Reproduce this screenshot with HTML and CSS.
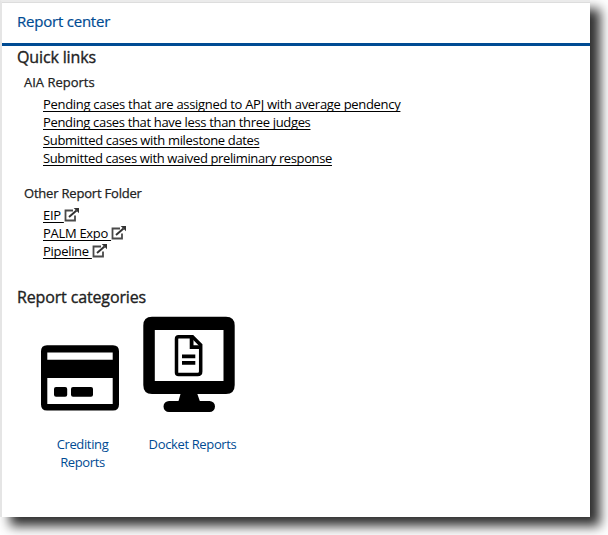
FILE: index.html
```html
<!DOCTYPE html>
<html lang="en">
<head>
<meta charset="utf-8">
<title>Report center</title>
<link rel="stylesheet" href="styles.css">
</head>
<body>
<svg width="0" height="0" class="defs" aria-hidden="true">
  <symbol id="external" viewBox="0 0 16 14">
    <path d="M9 2.5H1.5v10h9.5V7.5" fill="none" stroke="#4a4a4a" stroke-width="1.8"/>
    <path d="M5 9L12.5 2.6" fill="none" stroke="#333" stroke-width="2"/>
    <path d="M9.7 0H15v5.2z" fill="#333"/>
  </symbol>
</svg>
<main class="panel">
  <header class="header"><h1>Report center</h1></header>
  <section class="quick">
    <h2>Quick links</h2>
    <h3 class="aia">AIA Reports</h3>
    <ul class="links">
      <li><a href="#" class="l1">Pending cases that are assigned to APJ with average pendency</a></li>
      <li><a href="#" class="l2">Pending cases that have less than three judges</a></li>
      <li><a href="#" class="l3">Submitted cases with milestone dates</a></li>
      <li><a href="#" class="l4">Submitted cases with waived preliminary response</a></li>
    </ul>
    <h3 class="other">Other Report Folder</h3>
    <ul class="links">
      <li><a href="#">EIP&nbsp;</a><svg class="ext"><use href="#external"/></svg></li>
      <li><a href="#">PALM Expo&nbsp;</a><svg class="ext"><use href="#external"/></svg></li>
      <li><a href="#">Pipeline&nbsp;</a><svg class="ext"><use href="#external"/></svg></li>
    </ul>
  </section>
  <section>
    <h2 class="cat-title">Report categories</h2>
    <div class="categories">
      <a href="#" class="category crediting">
        <svg width="80" height="110" viewBox="0 0 80 110">
          <path fill-rule="evenodd" d="M7 35.3H73Q79 35.3 79 41.3V94.6Q79 100.6 73 100.6H7Q1 100.6 1 94.6V41.3Q1 35.3 7 35.3ZM7.3 42.5V49.7H72.7V42.5ZM7.3 68V94H72.7V68Z"/>
          <rect x="14" y="77" width="13.2" height="9.8" rx="2"/><rect x="31" y="77" width="22" height="9.8" rx="2"/>
        </svg>
        <span>Crediting<br>Reports</span>
      </a>
      <a href="#" class="category docket">
        <svg width="92" height="110" viewBox="0 0 92 110">
          <path fill-rule="evenodd" d="M9 6.7H83Q91.7 6.7 91.7 15.5V75Q91.7 84 83 84H9Q.3 84 .3 75V15.5Q.3 6.7 9 6.7ZM11.8 20V71H80.5V20Z"/>
          <path d="M37.8 83H54L56.8 91H66.5a5.3 5.3 0 0 1 0 11H26a5.5 5.5 0 0 1 0-11H35.5Z"/>
          <path d="M35.5 26.8H49.5L57.7 35V61.5Q57.7 64.5 54.7 64.5H35.5Q33.5 64.5 33.5 62.5V29Q33.5 26.8 35.5 26.8Z" fill="none" stroke="#000" stroke-width="3.5"/>
          <path d="M48.6 27V37.2H58M39 46.3H52.3M39 52.9H52.3" fill="none" stroke="#000" stroke-width="3.8"/>
        </svg>
        <span>Docket Reports</span>
      </a>
    </div>
  </section>
</main>
</body>
</html>
```
FILE: styles.css
```css
* { box-sizing: border-box; }
body { margin: 0; height: 535px; background: #fff; overflow: hidden; font: 13px/18px "Open Sans", "Noto Sans", sans-serif; color: #222; }
.defs { position: absolute; }
.panel { width: 590px; height: 517px; background: #fff; border-top: 2px solid #ebebeb; border-left: 2px solid #e5e5e5; box-shadow: 10px 9px 11px rgba(0, 0, 0, .82); }
h1, h2, h3, ul { margin: 0; padding: 0; }
h1, h2, h3 { white-space: nowrap; }
.header { height: 44px; padding: 8px 15px 0; border-top: 1px solid #ddd; border-bottom: 3px solid #004b93; }
h1 { font-size: 15px; line-height: 20px; font-weight: 400; letter-spacing: -.22px; color: #004b93; -webkit-text-stroke: .2px #004b93; }
h2 { font-size: 16px; line-height: 22px; font-weight: 400; padding-left: 15px; letter-spacing: -.14px; -webkit-text-stroke: .35px #222; }
h3 { font-size: 13px; line-height: 18px; font-weight: 400; padding-left: 22px; -webkit-text-stroke: .25px #222; }
.links { list-style: none; padding-left: 41px; margin-top: 4px; }
.links li { height: 18px; display: flex; white-space: nowrap; }
.links a { color: #000; letter-spacing: -.3px; text-decoration: underline; text-decoration-thickness: 1px; text-decoration-skip-ink: none; text-underline-offset: 2px; }
.links .l2 { letter-spacing: -.33px; }
.links .l3 { letter-spacing: -.34px; }
.links .l4 { letter-spacing: -.37px; }
.ext { width: 16px; height: 14px; margin-top: 2px; }
.aia { margin-top: 5px; }
.other { margin-top: 17px; letter-spacing: -.2px; }
.cat-title { margin-top: 26px; }
.categories { display: flex; align-items: flex-start; padding: 2px 0 0 38px; }
.category { display: flex; flex-direction: column; align-items: center; text-align: center; color: #004b93; letter-spacing: -.36px; text-decoration: none; }
.category svg { display: block; fill: #000; margin-bottom: 15px; }
.category span { white-space: nowrap; }
.crediting { width: 80px; margin-right: 23px; }
.crediting span { margin-left: 5px; }
.docket { width: 92px; }
.docket span { margin-left: 7px; }
```
